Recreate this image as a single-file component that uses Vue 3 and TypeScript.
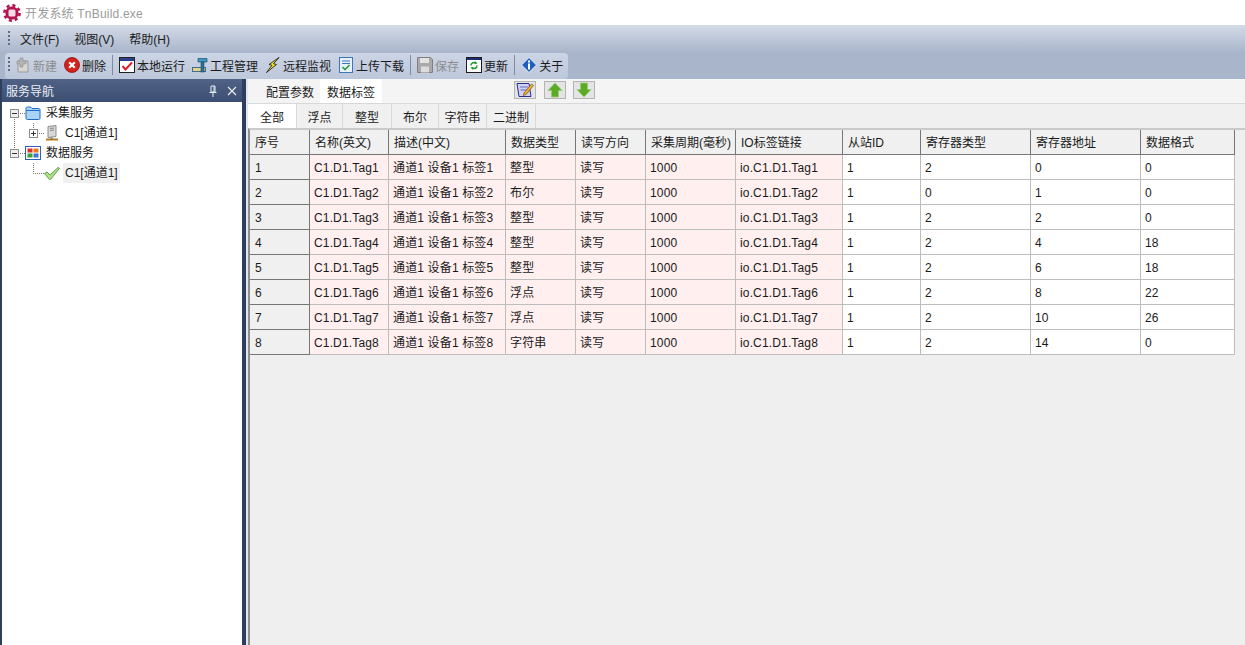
<script setup lang="ts">
const menus = ['文件(F)', '视图(V)', '帮助(H)']
type Tool = { icon: string; label: string; off?: boolean; sep?: boolean }
const tools: Tool[] = [
  { icon: 'new', label: '新建', off: true },
  { icon: 'del', label: '删除', sep: true },
  { icon: 'run', label: '本地运行' },
  { icon: 'proj', label: '工程管理' },
  { icon: 'bolt', label: '远程监视' },
  { icon: 'sync', label: '上传下载', sep: true },
  { icon: 'save', label: '保存', off: true },
  { icon: 'upd', label: '更新', sep: true },
  { icon: 'about', label: '关于' }
]
const tree = [
  { kind: 'a', icon: 'folder', label: '采集服务' },
  { kind: 'b', icon: 'pc', label: 'C1[通道1]' },
  { kind: 'c', icon: 'grid', label: '数据服务' },
  { kind: 'd', icon: 'check', label: 'C1[通道1]' }
]
const subTabs = ['全部', '浮点', '整型', '布尔', '字符串', '二进制']
const headers = ['序号', '名称(英文)', '描述(中文)', '数据类型', '读写方向', '采集周期(毫秒)', 'IO标签链接', '从站ID', '寄存器类型', '寄存器地址', '数据格式']
const types = ['整型', '布尔', '整型', '整型', '整型', '浮点', '浮点', '字符串']
const regType = [2, 0, 2, 2, 2, 2, 2, 2]
const addr = [0, 1, 2, 4, 6, 8, 10, 14]
const fmt = [0, 0, 0, 18, 18, 22, 26, 0]
const rows = types.map((t, i) => {
  const n = i + 1
  return [String(n), `C1.D1.Tag${n}`, `通道1 设备1 标签${n}`, t, '读写', '1000', `io.C1.D1.Tag${n}`, '1', String(regType[i]), String(addr[i]), String(fmt[i])]
})
</script>

<template>
  <div class="app">
    <header class="titlebar">
      <svg class="logo" width="18" height="18" viewBox="0 0 18 18">
        <circle cx="9" cy="9" r="7.6" fill="none" stroke="#b5124f" stroke-width="2.6" stroke-dasharray="3 3" />
        <circle cx="9" cy="9" r="6.6" fill="#b5124f" />
        <rect x="5.500" y="5.500" width="7" height="7" rx="1.500" fill="#f7dbe6" />
      </svg>
      <span class="title">开发系统 TnBuild.exe</span>
    </header>

    <nav class="menubar">
      <i class="grip"></i>
      <span v-for="m in menus" :key="m" class="menu">{{ m }}</span>
    </nav>

    <div class="toolrow">
      <div class="toolbar">
        <i class="grip"></i>
        <template v-for="t in tools" :key="t.label">
          <span class="tool" :class="{ off: t.off }">
            <svg width="16" height="16" viewBox="0 0 16 16">
              <template v-if="t.icon === 'new'">
                <path d="M3 4h10v11H3z" fill="#d6d6d6" stroke="#9a9a9a" />
                <path d="M5 1h3v3h3v3H8v3H5V7H2V4h3z" fill="#b5b5b5" stroke="#8f8f8f" stroke-width=".6" />
              </template>
              <template v-else-if="t.icon === 'del'">
                <circle cx="8" cy="8" r="7.5" fill="#d5211a" stroke="#8f140f" stroke-width=".8" />
                <path d="M5.200 5.200l5.600 5.600M10.800 5.200l-5.600 5.600" stroke="#fff" stroke-width="2.200" />
              </template>
              <template v-else-if="t.icon === 'run'">
                <rect x=".5" y=".5" width="15" height="15" fill="#fff" stroke="#222" />
                <rect x="1" y="1" width="14" height="3" fill="#2b3f8c" />
                <path d="M3.500 9l3 3.400L13 5.500" fill="none" stroke="#d8202a" stroke-width="2" />
              </template>
              <template v-else-if="t.icon === 'proj'">
                <rect x=".5" y="10.500" width="13" height="4" fill="#e7cf8d" stroke="#3f6d8c" />
                <path d="M6 1.500h9v3.500H6z" fill="#3f9ac0" stroke="#1f4d70" stroke-width=".7" />
                <rect x="9" y="5" width="3" height="10" fill="#2a6f94" stroke="#1f4d70" stroke-width=".6" />
              </template>
              <template v-else-if="t.icon === 'bolt'">
                <path d="M14 .5L4 7.500l3 .8L1.500 15.500l10-8-3-.8z" fill="#f6e71b" stroke="#222" stroke-width=".9" />
              </template>
              <template v-else-if="t.icon === 'sync'">
                <rect x="1.500" y=".5" width="13" height="15" fill="#e8f1fb" stroke="#3c78b4" />
                <path d="M4 4h8M4 6.500h8" stroke="#3c78b4" />
                <path d="M4.500 10l2.500 2.500L11.500 8" fill="none" stroke="#2f9b3a" stroke-width="1.600" />
              </template>
              <template v-else-if="t.icon === 'save'">
                <path d="M.5.5h13l2 2v13H.5z" fill="#a9a9a9" stroke="#7f7f7f" />
                <rect x="3" y="1" width="9" height="5" fill="#e3e3e3" />
                <rect x="4" y="9.500" width="8" height="6" fill="#dcdcdc" />
              </template>
              <template v-else-if="t.icon === 'upd'">
                <rect x=".5" y=".5" width="15" height="15" fill="#fff" stroke="#1b1b1b" />
                <rect x="1" y="1" width="14" height="2" fill="#1c2d78" />
                <path d="M5 8.500a3 3 0 0 1 5-2.300M11 8.500a3 3 0 0 1-5 2.300" fill="none" stroke="#1e9a2d" stroke-width="1.500" />
                <path d="M9 4l2.500 2.800L8.500 7zM7 13l-2.500-2.800 3-.2z" fill="#1e9a2d" />
              </template>
              <template v-else>
                <path d="M8 .5L15.500 8 8 15.500.5 8z" fill="#1f5fc0" stroke="#eef3fb" />
                <rect x="7" y="3.500" width="2" height="2" fill="#fff" />
                <rect x="7" y="6.500" width="2" height="6" fill="#fff" />
              </template>
            </svg>
            <span>{{ t.label }}</span>
          </span>
          <i v-if="t.sep" class="sep"></i>
        </template>
      </div>
    </div>

    <main class="workspace">
      <aside class="nav">
        <div class="nav-head">
          <span>服务导航</span>
          <span class="nav-actions">
            <svg width="10" height="12" viewBox="0 0 10 12"><path d="M3 1h4v6H3zM1.500 7.500h7M5 8v4M6 1v6" fill="none" stroke="#e6ebf3" /></svg>
            <svg width="10" height="10" viewBox="0 0 10 10"><path d="M1 1l8 8M9 1l-8 8" stroke="#e6ebf3" stroke-width="1.200" /></svg>
          </span>
        </div>
        <div class="tree">
          <div v-for="n in tree" :key="n.kind" class="node">
            <svg class="guide" width="44" height="20" viewBox="0 0 44 20">
              <g fill="none" stroke="#777" stroke-dasharray="1 1">
                <path v-if="n.kind === 'a'" d="M14.500 14v6M18 10.500h7" />
                <path v-if="n.kind === 'b'" d="M14.500 0v20M33.500 0v6M37 10.500h7" />
                <path v-if="n.kind === 'c'" d="M14.500 0v6M18 10.500h7" />
                <path v-if="n.kind === 'd'" d="M33.500 0v10.500H44" />
              </g>
              <g v-if="n.kind === 'a' || n.kind === 'c'">
                <rect x="10.500" y="6.500" width="8" height="8" fill="#eee" stroke="#8d8d8d" />
                <path d="M12 10.500h5" stroke="#333" />
              </g>
              <g v-if="n.kind === 'b'">
                <rect x="29.500" y="6.500" width="8" height="8" fill="#fff" stroke="#8d8d8d" />
                <path d="M31 10.500h5M33.500 8v5" stroke="#333" />
              </g>
            </svg>
            <svg class="node-icon" width="16" height="16" viewBox="0 0 16 16">
              <template v-if="n.icon === 'folder'">
                <path d="M1 3.500c0-1 .6-1.500 1.500-1.500h3l1.500 1.500h6.500c1 0 1.500.5 1.500 1.500v8c0 1-.5 1.500-1.500 1.500h-11C1.500 14.500 1 14 1 13z" fill="#a9d4f6" stroke="#1e68c8" />
                <path d="M1.500 5.500h13" stroke="#1e68c8" />
              </template>
              <template v-else-if="n.icon === 'pc'">
                <path d="M4 1.500L12 .5v11l-8 1z" fill="#d8d8d8" stroke="#8d8d8d" />
                <path d="M6 3.500l4-.5M6 5.500l4-.5" stroke="#888" />
                <path d="M2 14.500h12" stroke="#b87a20" stroke-width="2" />
                <path d="M7.500 12.500v2" stroke="#777" stroke-width="2" />
              </template>
              <template v-else-if="n.icon === 'grid'">
                <rect x=".5" y="1.500" width="15" height="13" fill="#fff" stroke="#2e62b8" />
                <rect x="2.500" y="3.500" width="5" height="4" fill="#d9342b" />
                <rect x="8.500" y="3.500" width="5" height="4" fill="#e8791c" />
                <rect x="2.500" y="8.500" width="5" height="4" fill="#37a33d" />
                <rect x="8.500" y="8.500" width="5" height="4" fill="#3c78d0" />
              </template>
              <template v-else>
                <path d="M.5 8.500l2.500-1.500 3 3L14 2.500l1.500.8L6.500 14.500h-1z" fill="#b4e08a" stroke="#4a9a3a" stroke-width=".9" />
              </template>
            </svg>
            <span class="node-label" :class="{ picked: n.kind === 'd', deep: n.kind === 'b' || n.kind === 'd' }">{{ n.label }}</span>
          </div>
        </div>
      </aside>
      <i class="splitter"></i>
      <section class="content">
        <div class="top-tabs">
          <span class="ttab">配置参数</span>
          <span class="ttab active">数据标签</span>
          <div class="top-btns">
            <button class="ibtn" type="button" aria-label="编辑">
              <svg width="18" height="16" viewBox="0 0 18 16">
                <path d="M1 1.500h12l2 13H3z" fill="#cfd2f0" stroke="#2b2f8e" />
                <path d="M4 5h8M4.500 8h7" stroke="#6b6fc0" />
                <path d="M8 11l7.500-9 2 1.500L10 12.500l-2.500 1z" fill="#f0b22c" stroke="#7a4e10" stroke-width=".7" />
              </svg>
            </button>
            <button class="ibtn" type="button" aria-label="上移">
              <svg width="16" height="16" viewBox="0 0 16 16"><path d="M8 1l7 7.500h-3.500V15h-7V8.500H1z" fill="#5cab24" stroke="#98c878" stroke-width=".8" /></svg>
            </button>
            <button class="ibtn" type="button" aria-label="下移">
              <svg width="16" height="16" viewBox="0 0 16 16"><path d="M8 15l7-7.500h-3.500V1h-7v6.500H1z" fill="#5cab24" stroke="#98c878" stroke-width=".8" /></svg>
            </button>
          </div>
        </div>
        <div class="sub-tabs">
          <span v-for="(s, i) in subTabs" :key="s" class="stab" :class="{ active: i === 0 }">{{ s }}</span>
        </div>
        <div class="grid-wrap">
          <div class="grid">
            <div v-for="h in headers" :key="h" class="cell head">{{ h }}</div>
            <template v-for="(r, ri) in rows" :key="ri">
              <div
                v-for="(c, ci) in r"
                :key="ci"
                class="cell data"
                :class="{ rowhead: ci === 0, pink: ci >= 1 && ci <= 6 }"
              >{{ c }}</div>
            </template>
          </div>
        </div>
      </section>
    </main>
  </div>
</template>

<style>
html, body { margin: 0; padding: 0; background: #fff; overflow: hidden; }
</style>

<style scoped>
.app {
  width: 1245px;
  height: 645px;
  display: flex;
  flex-direction: column;
  overflow: hidden;
  font-family: "Liberation Sans", "Noto Sans CJK SC", sans-serif;
  font-size: 12px;
  color: #1a1a1a;
}
.titlebar {
  height: 25px;
  flex: none;
  display: flex;
  align-items: center;
  gap: 4px;
  padding: 0 3px;
  background: #fff;
}
.title { color: #9a9a9a; font-size: 12px; letter-spacing: .2px; }
.menubar {
  height: 27px;
  flex: none;
  display: flex;
  align-items: center;
  padding-left: 8px;
  background: linear-gradient(#d4dbe8, #aab6cc);
}
.grip {
  width: 2px;
  height: 16px;
  flex: none;
  background: repeating-linear-gradient(#5f6c86 0 2px, transparent 2px 4px);
}
.menu { margin-left: 10px; margin-right: 5px; }
.toolrow {
  height: 27px;
  flex: none;
  box-sizing: border-box;
  padding-top: 1px;
  background: #a9b5cb;
}
.toolbar {
  width: 563px;
  height: 26px;
  margin-left: 5px;
  box-sizing: border-box;
  display: flex;
  align-items: center;
  gap: 7px;
  padding: 0 0 2px 3px;
  border-radius: 4px;
  background: linear-gradient(#ccd5e5, #bcc7da);
}
.toolbar .grip { margin-right: -2px; }
.tool {
  display: flex;
  align-items: center;
  gap: 2px;
  white-space: nowrap;
}
.tool.off { color: #8c8c8c; }
.sep {
  width: 1px;
  height: 20px;
  flex: none;
  margin: 0 -1px;
  background: #7f8ba3;
}
.workspace {
  flex: 1;
  min-height: 0;
  display: flex;
}
.nav {
  width: 242px;
  flex: none;
  box-sizing: border-box;
  border-left: 2px solid #2d3e5f;
  display: flex;
  flex-direction: column;
  background: #fff;
}
.nav-head {
  height: 23px;
  flex: none;
  display: flex;
  align-items: center;
  justify-content: space-between;
  padding: 0 5px 0 4px;
  color: #e9edf4;
  background: linear-gradient(#506387, #3c4f73);
}
.nav-actions { display: flex; align-items: center; gap: 9px; }
.tree { padding-top: 1px; }
.node { height: 20px; display: flex; align-items: center; margin-left: -2px; }
.guide { flex: none; width: 44px; }
.node-icon { flex: none; margin-left: -19px; }
.node-label { margin-left: 5px; white-space: nowrap; line-height: 20px; }
.node-label.deep { padding: 0 2px; margin-left: 3px; }
.node:nth-child(2) .node-icon, .node:nth-child(4) .node-icon { margin-left: 0; }
.node-label.picked { background: #f0f0f0; }
.splitter {
  width: 6px;
  flex: none;
  background: linear-gradient(90deg, #2d3e5f 0 4px, #e4e6ea 4px);
}
.content {
  flex: 1;
  min-width: 0;
  display: flex;
  flex-direction: column;
  background: #f0f0f0;
}
.top-tabs {
  height: 25px;
  flex: none;
  box-sizing: border-box;
  display: flex;
  align-items: stretch;
  padding-left: 12px;
  border-bottom: 1px solid #d8d8d8;
  background: #f4f4f4;
}
.ttab {
  display: flex;
  align-items: center;
  justify-content: center;
  width: 60px;
}
.ttab.active { background: #fff; width: 62px; }
.top-btns {
  display: flex;
  align-items: center;
  gap: 8px;
  margin-left: 132px;
  padding-bottom: 2px;
}
.ibtn {
  width: 22px;
  height: 18px;
  padding: 0;
  display: flex;
  align-items: center;
  justify-content: center;
  border: 1px solid #b4b4b4;
  background: #e4e4e4;
}
.ibtn:last-child { margin-left: -1px; }
.sub-tabs {
  height: 24px;
  flex: none;
  display: flex;
  background: #f0f0f0;
}
.stab {
  box-sizing: border-box;
  display: flex;
  align-items: center;
  justify-content: center;
  border-right: 1px solid #d9d9d9;
  white-space: nowrap;
}
.stab:nth-child(1) { width: 49px; background: #fff; }
.stab:nth-child(2) { width: 46px; }
.stab:nth-child(3) { width: 49px; }
.stab:nth-child(4) { width: 47px; }
.stab:nth-child(5) { width: 48px; }
.stab:nth-child(6) { width: 49px; }
.grid-wrap {
  flex: 1;
  min-height: 0;
  box-sizing: border-box;
  padding-left: 2px;
  border-top: 2px solid #c9c9c9;
  border-left: 2px solid #8f8f8f;
  margin-left: 0;
  background: #efefef;
}
.grid {
  display: grid;
  grid-template-columns: 60px 79px 117px 70px 70px 90px 107px 78px 110px 110px 94px;
  grid-auto-rows: 25px;
  margin-left: -2px;
}
.cell {
  box-sizing: border-box;
  display: flex;
  align-items: center;
  padding-left: 5px;
  line-height: 24px;
  background: #fff;
  border-right: 1px solid #bdbdbd;
  border-bottom: 1px solid #bdbdbd;
  white-space: nowrap;
  overflow: hidden;
}
.data { padding: 1px 0 0 4px; letter-spacing: .15px; }
.head, .rowhead {
  background: #f0f0f0;
  border-right-color: #767676;
  border-bottom-color: #767676;
}
.head { padding-top: 2px; }
.rowhead { padding-left: 5px; }
.pink { background: #ffefef; }
</style>
